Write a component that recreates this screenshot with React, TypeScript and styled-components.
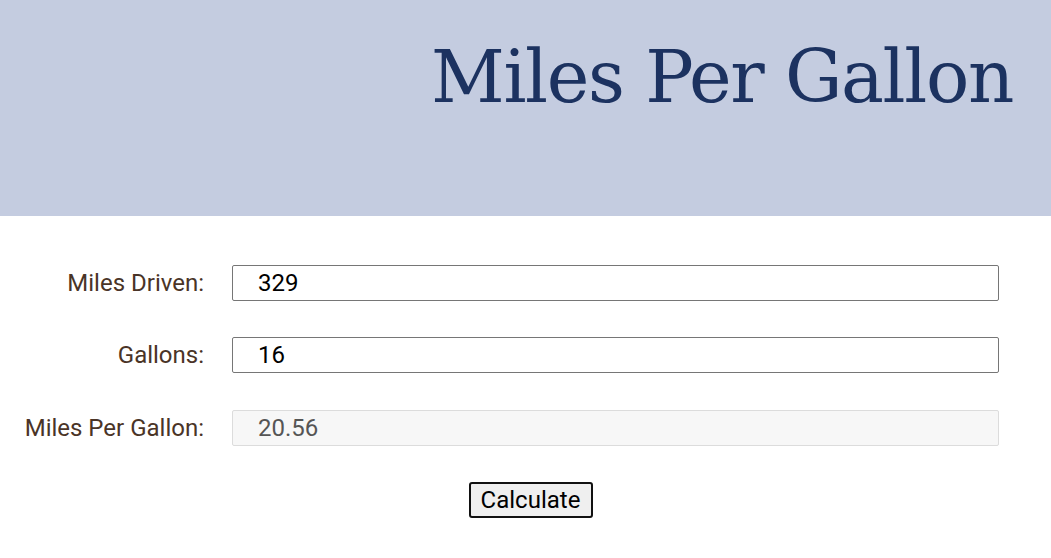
import React from "react";
import styled, { createGlobalStyle } from "styled-components";

const Global = createGlobalStyle`
  html, body { margin: 0; padding: 0; background: #fff; }
  body { font-family: Roboto, "Liberation Sans", sans-serif; }
  * { box-sizing: border-box; }
`;

const Header = styled.header`
  height: 216px;
  background: #c4cce0;
  display: flex;
  justify-content: flex-end;
  align-items: flex-start;
  padding: 29px 38px 0 0;
`;

const Title = styled.h1`
  margin: 0;
  font-family: "DejaVu Serif", "Liberation Serif", serif;
  font-weight: normal;
  font-size: 72px;
  line-height: 96px;
  color: #1c3260;
  letter-spacing: -1.35px;
`;

const Form = styled.main`
  padding: 49px 52px 0 0;
  display: flex;
  flex-direction: column;
`;

const Row = styled.div`
  display: grid;
  grid-template-columns: 204px 1fr;
  column-gap: 28px;
  align-items: center;
  height: 36px;
  margin-bottom: 36.4px;
`;

const Label = styled.label`
  text-align: right;
  font-size: 24px;
  color: #4a3427;
`;

const Field = styled.input<{ $readOnly?: boolean }>`
  height: 36px;
  width: 100%;
  font-family: Roboto, "Liberation Sans", sans-serif;
  font-size: 24px;
  padding: 0 0 0 25px;
  border-radius: 2px;
  border: 1px solid ${(p) => (p.$readOnly ? "#dcdcdc" : "#767676")};
  background: ${(p) => (p.$readOnly ? "#f7f7f7" : "#fff")};
  color: ${(p) => (p.$readOnly ? "#555" : "#000")};
  outline: none;
`;

const Actions = styled.div`
  display: flex;
  justify-content: center;
  padding-left: 62px;
`;

const Button = styled.button`
  width: 124px;
  height: 36px;
  font-family: Roboto, "Liberation Sans", sans-serif;
  font-size: 24px;
  color: #000;
  background: #efefef;
  border: 2px solid #111;
  border-radius: 3px;
  padding: 0;
`;

export default function App() {
  return (
    <>
      <Global />
      <Header>
        <Title>Miles Per Gallon</Title>
      </Header>
      <Form>
        <Row>
          <Label>Miles Driven:</Label>
          <Field defaultValue="329" />
        </Row>
        <Row>
          <Label>Gallons:</Label>
          <Field defaultValue="16" />
        </Row>
        <Row>
          <Label>Miles Per Gallon:</Label>
          <Field $readOnly readOnly value="20.56" />
        </Row>
        <Actions>
          <Button>Calculate</Button>
        </Actions>
      </Form>
    </>
  );
}
